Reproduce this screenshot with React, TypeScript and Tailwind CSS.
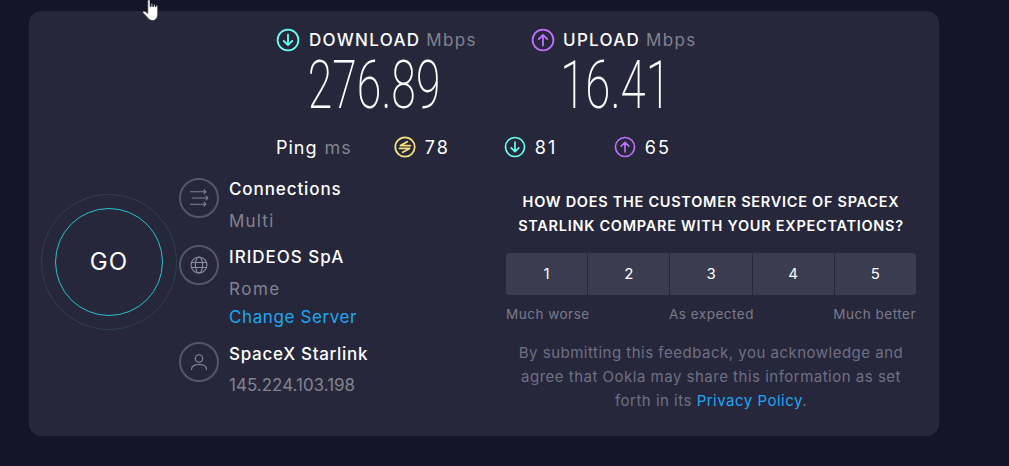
const sans = { fontFamily: "Inter, 'Open Sans', sans-serif" };
const digits = { fontFamily: "Roboto, sans-serif" };

function ArrowCircle({ color, up, size = 24 }: { color: string; up?: boolean; size?: number }) {
  return (
    <svg width={size} height={size} viewBox="0 0 24 24" fill="none" stroke={color} strokeWidth="1.8" strokeLinecap="round" strokeLinejoin="round" className="shrink-0">
      <circle cx="12" cy="12" r="10.4" />
      {up ? <path d="M12 17.5V7M7.8 11L12 6.8L16.2 11" /> : <path d="M12 6.5V17M7.8 13L12 17.2L16.2 13" />}
    </svg>
  );
}

function PingIcon() {
  return (
    <svg width="22" height="22" viewBox="0 0 24 24" fill="none" stroke="#f6e27f" strokeWidth="1.9" strokeLinecap="round" strokeLinejoin="round" className="shrink-0">
      <circle cx="12" cy="12" r="10.6" />
      <path d="M14.5 6.2L7 10.4H18M6 13.6H17L9.5 17.8" />
    </svg>
  );
}

function Hand() {
  return (
    <svg width="18" height="22" viewBox="0 0 18 22" className="absolute left-[142px] top-0">
      <path d="M5.8 0H8V6.5H9.2V3.6H10.4V6.5H11.8V4.4H13V6.5H14.2V5.6H15.6V13.5C15.6 17.5 14 20.5 10.5 20.5C8 20.5 6.5 19 5 17L0.8 12.5C0.8 11.5 2 11 3 11.5L5.8 13.5V0Z" fill="#fff" stroke="#222" strokeWidth="0.5" />
    </svg>
  );
}

function InfoIcon({ children }: { children: React.ReactNode }) {
  return (
    <div className="w-10 h-10 rounded-full border-2 border-[#55566a] flex items-center justify-center shrink-0">
      <svg width="20" height="20" viewBox="0 0 20 20" fill="none" stroke="#8d8e9e" strokeWidth="1.1" strokeLinecap="round" strokeLinejoin="round">
        {children}
      </svg>
    </div>
  );
}

export default function App() {
  return (
    <div className="relative w-[1009px] h-[466px] bg-[#141526] pt-[11px] pl-[29px] overflow-hidden" style={sans}>
      <Hand />
      <div className="w-[910px] h-[425px] bg-[#26273a] rounded-xl flex flex-col text-white">
        {/* speeds */}
        <div className="flex pl-[247px] pt-[17px]">
          <div className="w-[255px]">
            <div className="flex items-center gap-[9px] h-6 text-[17px] font-medium">
              <ArrowCircle color="#6afff3" />
              <span className="tracking-[1.3px] mt-[2px]">DOWNLOAD <span className="text-[#82838f] font-normal tracking-[1.4px]">Mbps</span></span>
            </div>
            <div className="w-[190px] text-center h-[62px] mt-[2px] text-[67px] leading-[62px] font-extralight scale-x-[0.665]" style={digits}>276.89</div>
          </div>
          <div>
            <div className="flex items-center gap-[8px] h-6 text-[17px] font-medium">
              <ArrowCircle color="#bf71ff" up />
              <span className="tracking-[1.3px] mt-[2px]">UPLOAD <span className="text-[#82838f] font-normal tracking-[1.4px]">Mbps</span></span>
            </div>
            <div className="w-[169px] text-center h-[62px] mt-[2px] text-[67px] leading-[62px] font-extralight scale-x-[0.68]" style={digits}>16.41</div>
          </div>
        </div>
        {/* ping */}
        <div className="flex items-center pl-[247px] mt-[19px] h-6 text-[18px] tracking-[1px]">
          <span>Ping</span>
          <span className="ml-[7px] text-[#82838f]">ms</span>
          <div className="ml-[42px] flex items-center gap-[9px] w-[110px]"><PingIcon /><span className="tracking-[2px]">78</span></div>
          <div className="flex items-center gap-[9px] w-[110px]"><ArrowCircle color="#6afff3" size={22} /><span className="tracking-[2px]">81</span></div>
          <div className="flex items-center gap-[9px]"><ArrowCircle color="#bf71ff" size={22} up /><span className="tracking-[2px]">65</span></div>
        </div>
        {/* lower */}
        <div className="flex mt-[19px]">
          <div className="ml-3 mt-[16px] w-[136px] h-[136px] rounded-full border border-[#2f3f50] flex items-center justify-center shrink-0">
            <div className="w-[108px] h-[108px] rounded-full border border-[#27c4cf] flex items-center justify-center text-[24px] font-normal tracking-[1px]">GO</div>
          </div>
          <div className="ml-[2px] w-[327px] shrink-0">
            <div className="flex gap-[10px] h-[67px]">
              <InfoIcon>
                <path d="M1.5 3.8H15" strokeDasharray="1.5 1.1" />
                <path d="M3.5 10H17" strokeDasharray="1.5 1.1" />
                <path d="M1.5 16.2H15" strokeDasharray="1.5 1.1" />
                <path d="M15 2L16.8 3.8L15 5.6M17 8.2L18.8 10L17 11.8M15 14.4L16.8 16.2L15 18" />
              </InfoIcon>
              <div className="-mt-px">
                <div className="text-[17px] font-medium leading-6 tracking-[0.9px]">Connections</div>
                <div className="text-[#82838f] text-[17px] leading-6 mt-2 tracking-[1.2px]">Multi</div>
              </div>
            </div>
            <div className="flex gap-[10px] h-[97px]">
              <InfoIcon>
                <circle cx="10" cy="10" r="8" />
                <ellipse cx="10" cy="10" rx="3.6" ry="8" />
                <path d="M2.5 7.5H17.5M2.5 12.5H17.5" />
              </InfoIcon>
              <div>
                <div className="text-[17px] font-medium leading-6 tracking-[1px]">IRIDEOS SpA</div>
                <div className="text-[#82838f] text-[17px] leading-6 mt-2 tracking-[1.5px]">Rome</div>
                <div className="text-[#1ea7f2] text-[17px] leading-6 mt-1 tracking-[0.6px]">Change Server</div>
              </div>
            </div>
            <div className="flex gap-[10px]">
              <InfoIcon>
                <circle cx="10" cy="6.5" r="3.7" />
                <path d="M2.5 17.5C2.5 13.5 6 12.5 10 12.5C14 12.5 17.5 13.5 17.5 17.5" />
              </InfoIcon>
              <div>
                <div className="text-[17px] font-medium leading-6 tracking-[0.7px]">SpaceX Starlink</div>
                <div className="text-[#82838f] text-[17px] leading-6 mt-[7px]">145.224.103.198</div>
              </div>
            </div>
          </div>
          <div className="w-[410px] shrink-0 pt-[12px]">
            <div className="text-center text-[14.5px] font-semibold leading-6 tracking-[0.72px]">
              HOW DOES THE CUSTOMER SERVICE OF SPACEX<br />STARLINK COMPARE WITH YOUR EXPECTATIONS?
            </div>
            <div className="flex h-[42px] mt-[15px] rounded-[3px] overflow-hidden gap-px text-[15px] bg-[#26273a]">
              {["1", "2", "3", "4", "5"].map((n) => (
                <div key={n} className="flex-1 bg-[#3a3c50] flex items-center justify-center">{n}</div>
              ))}
            </div>
            <div className="flex justify-between mt-[9px] text-[13.5px] leading-5 text-[#7a7b8c] tracking-[0.5px]">
              <span>Much worse</span><span>As expected</span><span>Much better</span>
            </div>
            <div className="mt-[17px] text-center text-[15px] leading-6 text-[#6f7084] tracking-[0.5px]">
              By submitting this feedback, you acknowledge and<br />agree that Ookla may share this information as set<br />forth in its <span className="text-[#1ea7f2]">Privacy Policy</span>.
            </div>
          </div>
        </div>
      </div>
    </div>
  );
}
